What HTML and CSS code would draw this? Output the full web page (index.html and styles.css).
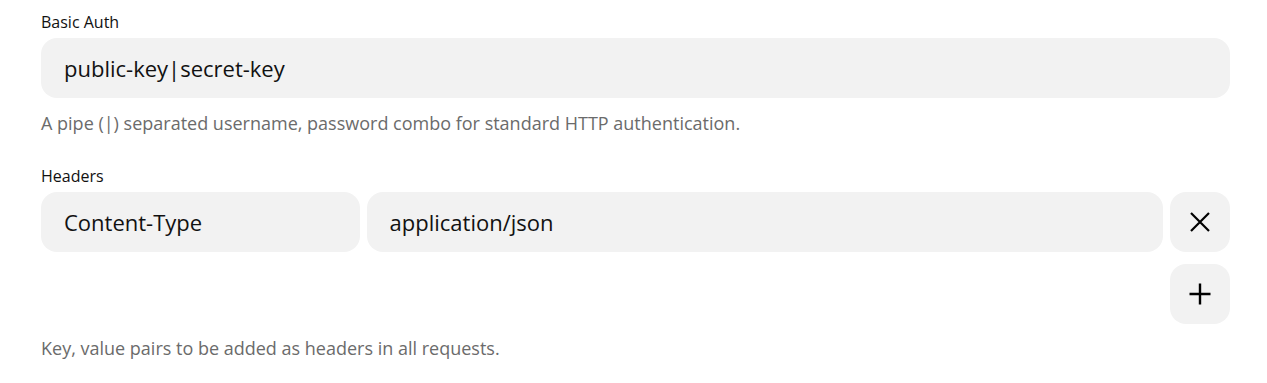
FILE: index.html
```html
<!DOCTYPE html>
<html lang="en">
<head>
    <meta charset="UTF-8">
    <meta name="viewport" content="width=device-width, initial-scale=1.0">
    <title>Request Settings</title>
    <link rel="stylesheet" href="styles.css">
</head>
<body>
    <div class="settings">
        <div class="field">
            <label class="field-label" for="basic-auth">Basic Auth</label>
            <input class="text-input" id="basic-auth" type="text" value="public-key|secret-key">
            <div class="field-help">A pipe (|) separated username, password combo for standard HTTP authentication.</div>
        </div>

        <div class="field field-headers">
            <div class="field-label">Headers</div>
            <div class="header-rows">
                <div class="header-row">
                    <input class="text-input" type="text" value="Content-Type">
                    <input class="text-input" type="text" value="application/json">
                    <button class="icon-button" title="Remove">
                        <svg width="24" height="24" viewBox="0 0 24 24" fill="none" stroke="#000" stroke-width="2.2">
                            <path d="M3 3 L21 21 M21 3 L3 21"/>
                        </svg>
                    </button>
                </div>
                <div class="header-row add-row">
                    <button class="icon-button" title="Add">
                        <svg width="24" height="24" viewBox="0 0 24 24" fill="none" stroke="#000" stroke-width="2.4">
                            <path d="M12 1.5 V22.5 M1.5 12 H22.5"/>
                        </svg>
                    </button>
                </div>
            </div>
            <div class="field-help">Key, value pairs to be added as headers in all requests.</div>
        </div>
    </div>
</body>
</html>
```

FILE: styles.css
```css
body {
    font-family: 'Open Sans', 'Noto Sans', sans-serif;
    background-color: #ffffff;
    color: #111111;
    margin: 0;
    padding: 0;
}
.settings {
    padding: 10px 37px 0 41px;
}
.field {
    display: flex;
    flex-direction: column;
}
.field-headers {
    margin-top: 29px;
}
.field-label {
    font-size: 16px;
    line-height: 24px;
    margin-bottom: 4px;
}
.text-input {
    height: 60px;
    box-sizing: border-box;
    border: none;
    outline: none;
    border-radius: 16px;
    background-color: #f2f2f2;
    padding: 0 23px;
    font-family: inherit;
    font-size: 22px;
    color: #111111;
    min-width: 0;
}
.field-help {
    font-size: 18px;
    line-height: 24px;
    color: #6b6b6b;
    margin-top: 13px;
}
.field-headers .field-help {
    margin-top: 12px;
}
.header-rows {
    display: flex;
    flex-direction: column;
    gap: 12px;
}
.header-row {
    display: grid;
    grid-template-columns: 2fr 5fr 60px;
    gap: 7px;
}
.add-row {
    display: flex;
    justify-content: flex-end;
}
.icon-button {
    width: 60px;
    height: 60px;
    border: none;
    border-radius: 16px;
    background-color: #f2f2f2;
    padding: 0;
    display: flex;
    align-items: center;
    justify-content: center;
    cursor: pointer;
}
```
